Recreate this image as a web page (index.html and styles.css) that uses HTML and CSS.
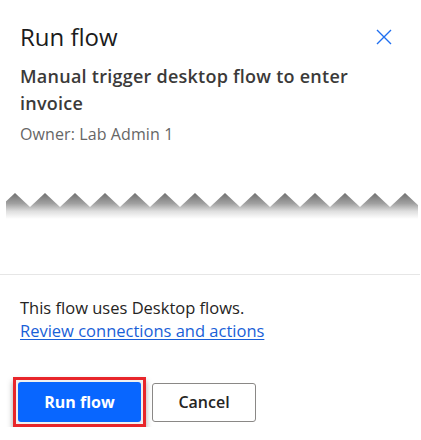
FILE: index.html
```html
<!DOCTYPE html>
<html>
<head>
<meta charset="utf-8">
<link rel="stylesheet" href="styles.css">
</head>
<body>
<div class="panel">
  <div class="header">
    <h1 class="title">Run flow</h1>
    <button class="close" aria-label="Close">
      <svg width="16" height="16" viewBox="0 0 16 16"><path d="M1 1 L15 15 M15 1 L1 15" stroke="#1f6ff0" stroke-width="1.4" fill="none"/></svg>
    </button>
  </div>
  <h2 class="subtitle">Manual trigger desktop flow to enter invoice</h2>
  <div class="owner">Owner: Lab Admin 1</div>
  <svg class="zigzag" width="421" height="26" viewBox="0 0 421 26">
    <defs>
      <linearGradient id="g" x1="0" y1="0" x2="0" y2="1">
        <stop offset="0" stop-color="#707070"/>
        <stop offset="0.4" stop-color="#a0a0a0"/>
        <stop offset="0.7" stop-color="#dedede"/>
        <stop offset="1" stop-color="#ffffff"/>
      </linearGradient>
      <pattern id="p" x="0" y="0" width="30" height="26" patternUnits="userSpaceOnUse">
        <polygon points="0,14 15,0 30,14 30,26 0,26" fill="url(#g)"/>
      </pattern>
    </defs>
    <rect x="6" y="0" width="412" height="26" fill="url(#p)"/>
  </svg>
  <div class="divider"></div>
  <p class="note">This flow uses Desktop flows.<br><a href="#" class="link">Review connections and actions</a></p>
  <div class="actions">
    <span class="highlight"><button class="btn primary">Run flow</button></span>
    <button class="btn secondary">Cancel</button>
  </div>
</div>
</body>
</html>
```

FILE: styles.css
```css
html, body {
  margin: 0;
  padding: 0;
  background: #ffffff;
}
body {
  font-family: "Open Sans", "Noto Sans", sans-serif;
  color: #201f1e;
}
.panel {
  padding-top: 21px;
}
.header {
  display: flex;
  align-items: center;
  justify-content: space-between;
  padding: 0 29px 0 20px;
}
.title {
  margin: 0;
  font-size: 24px;
  line-height: 32px;
  font-weight: 400;
  color: #1b1b1b;
}
.close {
  border: 0;
  background: none;
  padding: 0;
  width: 16px;
  height: 16px;
  display: flex;
}
.subtitle {
  margin: 10px 40px 0 20px;
  font-size: 18px;
  line-height: 27px;
  font-weight: 600;
  letter-spacing: 0.25px;
  color: #3b3a39;
}
.owner {
  margin: 7px 0 0 20px;
  font-size: 16px;
  line-height: 20px;
  letter-spacing: 0.1px;
  color: #666666;
}
.zigzag {
  display: block;
  margin-top: 49px;
}
.divider {
  margin-top: 55px;
  height: 1px;
  background: #e6e6e6;
  margin-right: 1px;
}
.note {
  margin: 21px 0 0 20px;
  font-size: 16.5px;
  line-height: 23px;
  color: #252423;
}
.link {
  color: #1a5fd8;
  text-decoration: underline;
  text-underline-offset: 2px;
}
.actions {
  display: flex;
  align-items: center;
  gap: 6px;
  margin: 35px 0 0 13px;
}
.highlight {
  display: inline-flex;
  border: 3px solid #e8262b;
  padding: 2px;
  background: #f0f0f0;
  box-shadow: 0 4px 6px rgba(0, 0, 0, 0.35);
}
.btn {
  font-family: "Open Sans", "Noto Sans", sans-serif;
  font-size: 16px;
  font-weight: 600;
  height: 40px;
  border-radius: 3px;
  padding: 0;
  cursor: pointer;
}
.primary {
  width: 123px;
  background: #0866ff;
  color: #ffffff;
  border: 0;
  font-weight: 700;
}
.secondary {
  width: 104px;
  height: 39px;
  background: #ffffff;
  color: #252423;
  border: 1px solid #8a8886;
}
```
